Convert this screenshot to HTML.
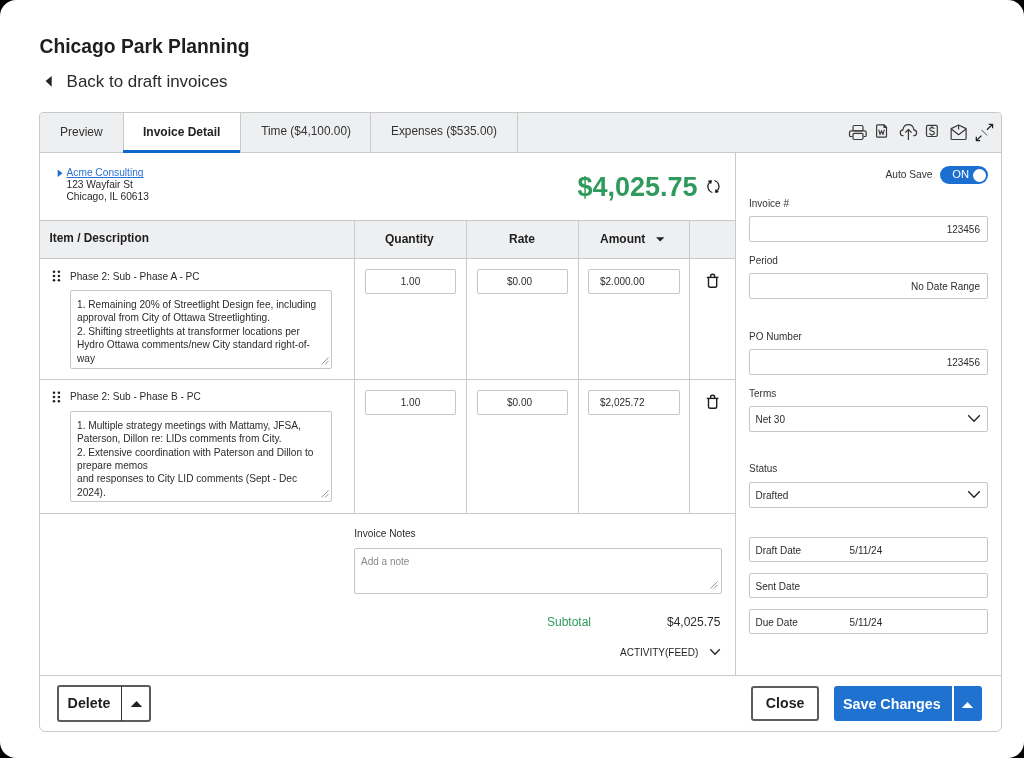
<!DOCTYPE html>
<html><head><meta charset="utf-8">
<style>
*{box-sizing:border-box;margin:0;padding:0}
html,body{width:1024px;height:758px;overflow:hidden;background:#000}
body{font-family:"Liberation Sans",sans-serif;color:#222;position:relative}
.screen{will-change:transform;position:absolute;left:0;top:0;width:1024px;height:758px;background:#fff;border-radius:16px;overflow:hidden}
.a{position:absolute}
.t{position:absolute;white-space:nowrap;line-height:1}
.card{position:absolute;left:39px;top:112px;width:963px;height:620px;border:1px solid #c9c9c9;border-radius:4px 4px 6px 6px}
.tabbar{position:absolute;left:40px;top:113px;width:961px;height:40px;background:#eeeff1;border-bottom:1px solid #c9c9c9;border-radius:4px 4px 0 0}
.vl{position:absolute;width:1px;background:#c9c9c9}
.hl{position:absolute;height:1px;background:#c9c9c9}
.box{position:absolute;border:1px solid #c6c6c6;border-radius:2px;background:#fff}
.f10{font-size:10px;color:#2b2b2b}
.lbl{font-size:10px;color:#333}
svg{position:absolute;overflow:visible}
</style></head>
<body>
<div class="screen">
  <div class="t" style="left:39.5px;top:36.5px;font-size:19.3px;font-weight:700;color:#1e1e1e">Chicago Park Planning</div>
  <svg style="left:44px;top:75px" width="9" height="13" viewBox="0 0 9 13"><path d="M7.7 1 L1.6 6.1 L7.7 11.7 Z" fill="#222"/></svg>
  <div class="t" style="left:66.6px;top:74.1px;font-size:16.95px;color:#2a2a2a">Back to draft invoices</div>

  <div class="card"></div>
  <div class="tabbar"></div>
  <!-- tabs -->
  <div class="vl" style="left:123px;top:113px;height:40px"></div>
  <div class="a" style="left:124px;top:113px;width:116px;height:40px;background:#fff"></div>
  <div class="a" style="left:123px;top:150px;width:118px;height:3px;background:#0b67c9"></div>
  <div class="vl" style="left:240px;top:113px;height:40px"></div>
  <div class="vl" style="left:370px;top:113px;height:40px"></div>
  <div class="vl" style="left:517px;top:113px;height:40px"></div>
  <div class="t" style="left:60px;top:126px;font-size:12px;color:#333">Preview</div>
  <div class="t" style="left:143px;top:126px;font-size:12px;font-weight:700;color:#222">Invoice Detail</div>
  <div class="t" style="left:261.2px;top:126px;font-size:11.85px;color:#333">Time ($4,100.00)</div>
  <div class="t" style="left:391px;top:126px;font-size:11.85px;color:#333">Expenses ($535.00)</div>

  <!-- toolbar icons -->
  <svg style="left:0;top:0" width="1024" height="160" fill="none" stroke="#3a3a3a" stroke-width="1.2" stroke-linejoin="round">
    <!-- printer -->
    <rect x="853" y="125.5" width="10" height="5.5" rx="1.5"/>
    <path d="M852.5 136.5 H850.5 Q849.5 136.5 849.5 135.5 V132.5 Q849.5 130.8 851.5 130.8 H864.5 Q866.2 130.8 866.2 132.5 V135.5 Q866.2 136.5 865.2 136.5 H863.5"/>
    <rect x="853" y="133.3" width="10" height="6.2" rx="1.2"/>
    <!-- word -->
    <path d="M877.5 124.8 H884 L886.5 127.3 V136.3 Q886.5 137.2 885.6 137.2 H877.5 Q876.6 137.2 876.6 136.3 V125.7 Q876.6 124.8 877.5 124.8 Z"/>
    <path d="M884 124.8 L886.5 127.3 L884 127.3 Z" fill="#333"/>
    <path d="M878.8 129.6 L880 134.6 L881.5 130.6 L883 134.6 L884.3 129.6" stroke-width="1.1"/>
    <!-- cloud upload -->
    <path d="M903.5 135.6 H902.5 Q900.3 135.6 900.3 132.8 Q900.3 130 903 129.8 Q903.5 124.6 908.4 124.6 Q913.3 124.6 913.8 129.8 Q916.6 130 916.6 132.8 Q916.6 135.6 914.2 135.6 H913.3"/>
    <path d="M908.4 140 V129.5 M905.2 132.7 L908.4 129.5 L911.6 132.7"/>
    <!-- dollar box -->
    <rect x="926.5" y="125.3" width="10.8" height="11.2" rx="1.4"/>
    <path d="M934.4 128.9 Q933.9 127.6 932 127.6 Q929.7 127.6 929.7 129.3 Q929.7 130.7 932 131.1 Q934.4 131.5 934.4 133.1 Q934.4 134.7 932 134.7 Q930 134.7 929.5 133.3 M932 125.9 V127.6 M932 134.7 V136.2" stroke-width="1.1"/>
    <!-- envelope -->
    <path d="M951.2 128.6 L958.6 125 L966.1 128.6 V138.4 Q966.1 139.5 965 139.5 H952.2 Q951.1 139.5 951.1 138.4 Z"/>
    <path d="M951.3 129 L958.6 134.7 L966 129"/>
    <path d="M958.6 125.2 V129.6"/>
    <!-- expand -->
    <path d="M976.4 140.5 L981.5 135.6 M976.3 136.8 V140.6 H980.1 M986.9 129.7 L992.5 124.5 M988.8 124.4 H992.6 V128.2" stroke-width="1.25" stroke="#222"/><path d="M981.6 129.9 L987 135.4" stroke-width="0.95" stroke="#444"/>
  </svg>

  <!-- address -->
  <svg style="left:56.5px;top:169px" width="6" height="9" viewBox="0 0 6 9"><path d="M0.7 0.5 L5.5 4.2 L0.7 8 Z" fill="#1a6fd0"/></svg>
  <div class="t" style="left:66.5px;top:168px;font-size:10.2px;color:#2a72d2;text-decoration:underline;text-decoration-skip-ink:none">Acme Consulting</div>
  <div class="t" style="left:66.5px;top:180.2px;font-size:10.2px;color:#2b2b2b">123 Wayfair St</div>
  <div class="t" style="left:66.5px;top:192.2px;font-size:10.2px;color:#2b2b2b">Chicago, IL 60613</div>

  <!-- big amount -->
  <div class="t" style="left:577.5px;top:174px;font-size:27px;font-weight:700;color:#2e9a5c">$4,025.75</div>
  <svg style="left:0;top:0" width="1024" height="200" fill="none" stroke="#1a1a1a" stroke-width="1.15">
    <path d="M712.4 192.5 A6.1 6.1 0 0 1 709.6 182.3"/>
    <path d="M708.3 181 L711.6 180.6 L710.9 183.6 Z" fill="#111" stroke-width="0.7"/>
    <path d="M714.4 180.5 A6.1 6.1 0 0 1 717.2 190.7"/>
    <path d="M718.5 192 L715.2 192.4 L715.9 189.4 Z" fill="#111" stroke-width="0.7"/>
  </svg>

  <!-- table header -->
  <div class="hl" style="left:40px;top:220px;width:695px"></div>
  <div class="a" style="left:40px;top:221px;width:695px;height:37px;background:#eeeff1"></div>
  <div class="hl" style="left:40px;top:258px;width:695px"></div>
  <div class="vl" style="left:354px;top:220px;height:293px"></div>
  <div class="vl" style="left:466px;top:220px;height:293px"></div>
  <div class="vl" style="left:578px;top:220px;height:293px"></div>
  <div class="vl" style="left:689px;top:220px;height:293px"></div>
  <div class="t" style="left:49.5px;top:233.3px;font-size:11.85px;font-weight:700;color:#1e1e1e">Item / Description</div>
  <div class="t" style="left:385px;top:232.5px;font-size:12px;font-weight:700;color:#1e1e1e">Quantity</div>
  <div class="t" style="left:509px;top:232.5px;font-size:12px;font-weight:700;color:#1e1e1e">Rate</div>
  <div class="t" style="left:600px;top:232.5px;font-size:12px;font-weight:700;color:#1e1e1e">Amount</div>
  <svg style="left:656px;top:237px" width="9" height="5" viewBox="0 0 9 5"><path d="M0 0.3 H8.4 L4.2 4.6 Z" fill="#222"/></svg>

  <!-- row 1 -->
  <svg style="left:52px;top:270px" width="9" height="12" fill="#222">
    <circle cx="2" cy="1.8" r="1.3"/><circle cx="6.9" cy="1.8" r="1.3"/>
    <circle cx="2" cy="6" r="1.3"/><circle cx="6.9" cy="6" r="1.3"/>
    <circle cx="2" cy="10.2" r="1.3"/><circle cx="6.9" cy="10.2" r="1.3"/>
  </svg>
  <div class="t" style="left:70px;top:272px;font-size:10.1px;color:#2b2b2b">Phase 2: Sub - Phase A - PC</div>
  <div class="box" style="left:70px;top:290px;width:262px;height:79px"></div>
  <div class="a" style="left:77px;top:298px;font-size:10.13px;line-height:13.4px;color:#2b2b2b;white-space:nowrap">1. Remaining 20% of Streetlight Design fee, including<br>approval from City of Ottawa Streetlighting.<br>2. Shifting streetlights at transformer locations per<br>Hydro Ottawa comments/new City standard right-of-<br>way</div>
  <svg style="left:320px;top:356px" width="10" height="10" stroke="#8a8a8a" stroke-width="0.9"><path d="M1.5 8.5 L8.5 1.5 M5 8.5 L8.5 5"/></svg>
  <div class="box" style="left:365px;top:269px;width:91px;height:25px"></div>
  <div class="t" style="left:365px;top:276.5px;width:91px;text-align:center;font-size:10px;color:#2b2b2b">1.00</div>
  <div class="box" style="left:477px;top:269px;width:91px;height:25px"></div>
  <div class="t" style="left:507px;top:276.5px;font-size:10px;color:#2b2b2b">$0.00</div>
  <div class="box" style="left:588px;top:269px;width:92px;height:25px"></div>
  <div class="t" style="left:600px;top:276.5px;font-size:10px;color:#2b2b2b">$2.000.00</div>
  <svg style="left:0;top:0" width="1024" height="300" fill="none" stroke="#1e1e1e" stroke-width="1.4">
    <path d="M706.8 277.4 H718.4"/>
    <path d="M710.6 277.2 V276 Q710.6 274.3 712.6 274.3 Q714.6 274.3 714.6 276 V277.2"/>
    <path d="M708.5 277.6 V285.4 Q708.5 287.2 710.3 287.2 H714.9 Q716.7 287.2 716.7 285.4 V277.6"/>
  </svg>
  <div class="hl" style="left:40px;top:379px;width:695px"></div>

  <!-- row 2 -->
  <svg style="left:52px;top:391px" width="9" height="12" fill="#222">
    <circle cx="2" cy="1.8" r="1.3"/><circle cx="6.9" cy="1.8" r="1.3"/>
    <circle cx="2" cy="6" r="1.3"/><circle cx="6.9" cy="6" r="1.3"/>
    <circle cx="2" cy="10.2" r="1.3"/><circle cx="6.9" cy="10.2" r="1.3"/>
  </svg>
  <div class="t" style="left:70px;top:392px;font-size:10.1px;color:#2b2b2b">Phase 2: Sub - Phase B - PC</div>
  <div class="box" style="left:70px;top:411px;width:262px;height:91px"></div>
  <div class="a" style="left:77px;top:419px;font-size:10.13px;line-height:13.35px;color:#2b2b2b;white-space:nowrap">1. Multiple strategy meetings with Mattamy, JFSA,<br>Paterson, Dillon re: LIDs comments from City.<br>2. Extensive coordination with Paterson and Dillon to<br>prepare memos<br>and responses to City LID comments (Sept - Dec<br>2024).</div>
  <svg style="left:320px;top:489px" width="10" height="10" stroke="#8a8a8a" stroke-width="0.9"><path d="M1.5 8.5 L8.5 1.5 M5 8.5 L8.5 5"/></svg>
  <div class="box" style="left:365px;top:390px;width:91px;height:25px"></div>
  <div class="t" style="left:365px;top:397.5px;width:91px;text-align:center;font-size:10px;color:#2b2b2b">1.00</div>
  <div class="box" style="left:477px;top:390px;width:91px;height:25px"></div>
  <div class="t" style="left:507px;top:397.5px;font-size:10px;color:#2b2b2b">$0.00</div>
  <div class="box" style="left:588px;top:390px;width:92px;height:25px"></div>
  <div class="t" style="left:600px;top:397.5px;font-size:10px;color:#2b2b2b">$2,025.72</div>
  <svg style="left:0;top:121px" width="1024" height="300" fill="none" stroke="#1e1e1e" stroke-width="1.4">
    <path d="M706.8 277.4 H718.4"/>
    <path d="M710.6 277.2 V276 Q710.6 274.3 712.6 274.3 Q714.6 274.3 714.6 276 V277.2"/>
    <path d="M708.5 277.6 V285.4 Q708.5 287.2 710.3 287.2 H714.9 Q716.7 287.2 716.7 285.4 V277.6"/>
  </svg>
  <div class="hl" style="left:40px;top:513px;width:695px"></div>

  <!-- notes -->
  <div class="t" style="left:354.3px;top:529px;font-size:10.15px;color:#2b2b2b">Invoice Notes</div>
  <div class="box" style="left:354px;top:547.5px;width:368px;height:46px"></div>
  <div class="t" style="left:361px;top:557px;font-size:10px;color:#8a8a8a">Add a note</div>
  <svg style="left:709px;top:580px" width="10" height="10" stroke="#8a8a8a" stroke-width="0.9"><path d="M1.5 8.5 L8.5 1.5 M5 8.5 L8.5 5"/></svg>
  <div class="t" style="left:547px;top:616px;font-size:12px;color:#2e9a5c">Subtotal</div>
  <div class="t" style="left:667px;top:616px;font-size:12px;color:#2b2b2b">$4,025.75</div>
  <div class="t" style="left:620px;top:648px;font-size:10px;color:#1e1e1e">ACTIVITY(FEED)</div>
  <svg style="left:709px;top:648px" width="12" height="8" fill="none" stroke="#222" stroke-width="1.3"><path d="M1.3 1.2 L6 6.2 L10.8 1.2"/></svg>

  <!-- right panel -->
  <div class="vl" style="left:735px;top:153px;height:522px"></div>
  <div class="t" style="left:885.5px;top:170.2px;font-size:10.2px;color:#333">Auto Save</div>
  <div class="a" style="left:940px;top:166.3px;width:48px;height:17.8px;border-radius:9px;background:#1a6fd0"></div>
  <div class="t" style="left:952.3px;top:169.3px;font-size:11.2px;color:#fff">ON</div>
  <div class="a" style="left:973.2px;top:168.6px;width:13.3px;height:13.3px;border-radius:50%;background:#fff"></div>

  <div class="t" style="left:749px;top:198.6px;font-size:10px;color:#333">Invoice #</div>
  <div class="box" style="left:749px;top:216px;width:239px;height:26px"></div>
  <div class="t" style="left:749px;top:224.6px;width:231px;text-align:right;font-size:10px;color:#2b2b2b">123456</div>

  <div class="t" style="left:749px;top:255.6px;font-size:10px;color:#333">Period</div>
  <div class="box" style="left:749px;top:273px;width:239px;height:26px"></div>
  <div class="t" style="left:749px;top:281.6px;width:231px;text-align:right;font-size:10px;color:#2b2b2b">No Date Range</div>

  <div class="t" style="left:749px;top:331.6px;font-size:10px;color:#333">PO Number</div>
  <div class="box" style="left:749px;top:349px;width:239px;height:26px"></div>
  <div class="t" style="left:749px;top:357.6px;width:231px;text-align:right;font-size:10px;color:#2b2b2b">123456</div>

  <div class="t" style="left:749px;top:388.6px;font-size:10px;color:#333">Terms</div>
  <div class="box" style="left:749px;top:406px;width:239px;height:26px"></div>
  <div class="t" style="left:755.5px;top:414.6px;font-size:10px;color:#2b2b2b">Net 30</div>
  <svg style="left:967px;top:414px" width="14" height="9" fill="none" stroke="#222" stroke-width="1.3"><path d="M1.2 1.2 L7 7.2 L12.8 1.2"/></svg>

  <div class="t" style="left:749px;top:463.6px;font-size:10px;color:#333">Status</div>
  <div class="box" style="left:749px;top:482px;width:239px;height:26px"></div>
  <div class="t" style="left:755.5px;top:490.6px;font-size:10px;color:#2b2b2b">Drafted</div>
  <svg style="left:967px;top:490px" width="14" height="9" fill="none" stroke="#222" stroke-width="1.3"><path d="M1.2 1.2 L7 7.2 L12.8 1.2"/></svg>

  <div class="box" style="left:749px;top:537px;width:239px;height:25px"></div>
  <div class="t" style="left:755.5px;top:545.6px;font-size:10px;color:#2b2b2b">Draft Date</div>
  <div class="t" style="left:849.6px;top:545.6px;font-size:10px;color:#2b2b2b">5/11/24</div>
  <div class="box" style="left:749px;top:573px;width:239px;height:25px"></div>
  <div class="t" style="left:755.5px;top:581.6px;font-size:10px;color:#2b2b2b">Sent Date</div>
  <div class="box" style="left:749px;top:609px;width:239px;height:25px"></div>
  <div class="t" style="left:755.5px;top:617.6px;font-size:10px;color:#2b2b2b">Due Date</div>
  <div class="t" style="left:849.6px;top:617.6px;font-size:10px;color:#2b2b2b">5/11/24</div>

  <!-- footer -->
  <div class="hl" style="left:40px;top:675px;width:961px"></div>
  <div class="a" style="left:57px;top:685px;width:94px;height:36.6px;border:2px solid #5c5c5c;border-radius:3px"></div>
  <div class="a" style="left:121px;top:686px;width:1.4px;height:35px;background:#333"></div>
  <div class="t" style="left:67.6px;top:696.3px;font-size:14.25px;font-weight:700;color:#1e1e1e">Delete</div>
  <svg style="left:130px;top:700px" width="13" height="8" viewBox="0 0 13 8"><path d="M0.8 7 L6.5 1 L12.2 7 Z" fill="#222"/></svg>

  <div class="a" style="left:750.8px;top:685.5px;width:68.4px;height:35.9px;border:2px solid #5c5c5c;border-radius:3px"></div>
  <div class="t" style="left:765.8px;top:696.1px;font-size:14.2px;font-weight:700;color:#1e1e1e">Close</div>
  <div class="a" style="left:833.5px;top:685.7px;width:148.5px;height:35.8px;background:#1f72cf;border-radius:3px"></div>
  <div class="a" style="left:952px;top:686px;width:1.5px;height:36px;background:#fff"></div>
  <div class="t" style="left:843px;top:697px;font-size:14.3px;font-weight:700;color:#fff">Save Changes</div>
  <svg style="left:961px;top:701px" width="13" height="8" viewBox="0 0 13 8"><path d="M0.8 7 L6.5 1 L12.2 7 Z" fill="#fff"/></svg>
</div>
</body></html>
